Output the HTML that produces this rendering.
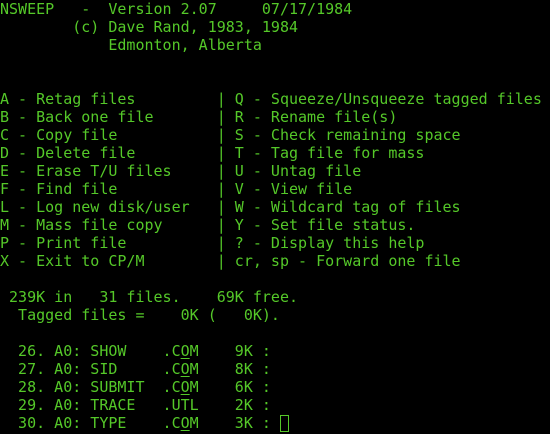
<!DOCTYPE html>
<html><head><meta charset="utf-8"><style>
html,body{margin:0;padding:0;background:#000;width:550px;height:434px;overflow:hidden}
pre{margin:0;padding:0;color:#55c829;font-family:"DejaVu Sans Mono","Liberation Mono",monospace;font-size:15px;line-height:18px}
u{text-decoration:underline;text-underline-offset:2px}
.cur{display:inline-block;width:9px;height:17px;border:1px solid #55c829;box-sizing:border-box;vertical-align:-4px}
</style></head><body><pre>NSWEEP   -  Version 2.07     07/17/1984
        (c) Dave Rand, 1983, 1984
            Edmonton, Alberta


A - Retag files         | Q - Squeeze/Unsqueeze tagged files
B - Back one file       | R - Rename file(s)
C - Copy file           | S - Check remaining space
D - Delete file         | T - Tag file for mass
E - Erase T/U files     | U - Untag file
F - Find file           | V - View file
L - Log new disk/user   | W - Wildcard tag of files
M - Mass file copy      | Y - Set file status.
P - Print file          | ? - Display this help
X - Exit to CP/M        | cr, sp - Forward one file

 239K in   31 files.    69K free.
  Tagged files =    0K (   0K).

  26. A0: SHOW    .C<u>O</u>M    9K :
  27. A0: SID     .C<u>O</u>M    8K :
  28. A0: SUBMIT  .C<u>O</u>M    6K :
  29. A0: TRACE   .UTL    2K :
  30. A0: TYPE    .C<u>O</u>M    3K : <span class="cur"></span></pre></body></html>
